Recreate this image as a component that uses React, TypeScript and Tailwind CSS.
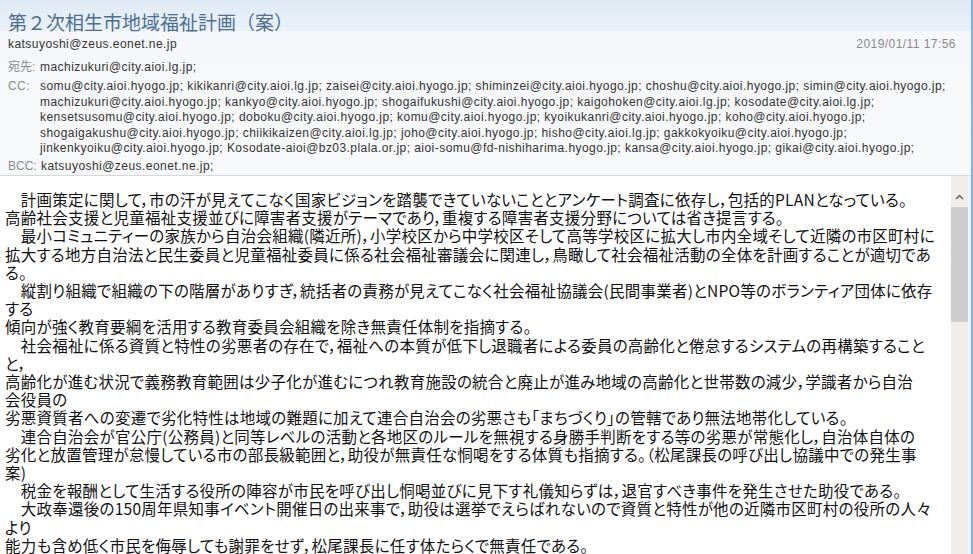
import React from "react";

const ccLines = [
  "somu@city.aioi.hyogo.jp; kikikanri@city.aioi.lg.jp; zaisei@city.aioi.hyogo.jp; shiminzei@city.aioi.hyogo.jp; choshu@city.aioi.hyogo.jp; simin@city.aioi.hyogo.jp;",
  "machizukuri@city.aioi.hyogo.jp; kankyo@city.aioi.hyogo.jp; shogaifukushi@city.aioi.hyogo.jp; kaigohoken@city.aioi.lg.jp; kosodate@city.aioi.lg.jp;",
  "kensetsusomu@city.aioi.hyogo.jp; doboku@city.aioi.hyogo.jp; komu@city.aioi.hyogo.jp; kyoikukanri@city.aioi.hyogo.jp; koho@city.aioi.hyogo.jp;",
  "shogaigakushu@city.aioi.hyogo.jp; chiikikaizen@city.aioi.lg.jp; joho@city.aioi.hyogo.jp; hisho@city.aioi.lg.jp; gakkokyoiku@city.aioi.hyogo.jp;",
  "jinkenkyoiku@city.aioi.hyogo.jp; Kosodate-aioi@bz03.plala.or.jp; aioi-somu@fd-nishiharima.hyogo.jp; kansa@city.aioi.hyogo.jp; gikai@city.aioi.hyogo.jp;",
];

const bodyLines = [
  "　計画策定に関して，市の汗が見えてこなく国家ビジョンを踏襲できていないこととアンケート調査に依存し，包括的PLANとなっている。",
  "高齢社会支援と児童福祉支援並びに障害者支援がテーマであり，重複する障害者支援分野については省き提言する。",
  "　最小コミュニティーの家族から自治会組織(隣近所)，小学校区から中学校区そして高等学校区に拡大し市内全域そして近隣の市区町村に",
  "拡大する地方自治法と民生委員と児童福祉委員に係る社会福祉審議会に関連し，鳥瞰して社会福祉活動の全体を計画することが適切であ",
  "る。",
  "　縦割り組織で組織の下の階層がありすぎ，統括者の責務が見えてこなく社会福祉協議会(民間事業者)とNPO等のボランティア団体に依存",
  "する",
  "傾向が強く教育要綱を活用する教育委員会組織を除き無責任体制を指摘する。",
  "　社会福祉に係る資質と特性の劣悪者の存在で，福祉への本質が低下し退職者による委員の高齢化と倦怠するシステムの再構築すること",
  "と，",
  "高齢化が進む状況で義務教育範囲は少子化が進むにつれ教育施設の統合と廃止が進み地域の高齢化と世帯数の減少，学識者から自治",
  "会役員の",
  "劣悪資質者への変遷で劣化特性は地域の難題に加えて連合自治会の劣悪さも「まちづくり」の管轄であり無法地帯化している。",
  "　連合自治会が官公庁(公務員)と同等レベルの活動と各地区のルールを無視する身勝手判断をする等の劣悪が常態化し，自治体自体の",
  "劣化と放置管理が怠慢している市の部長級範囲と，助役が無責任な恫喝をする体質も指摘する。（松尾課長の呼び出し協議中での発生事",
  "案)",
  "　税金を報酬として生活する役所の陣容が市民を呼び出し恫喝並びに見下す礼儀知らずは，退官すべき事件を発生させた助役である。",
  "　大政奉還後の150周年県知事イベント開催日の出来事で，助役は選挙でえらばれないので資質と特性が他の近隣市区町村の役所の人々",
  "より",
  "能力も含め低く市民を侮辱しても謝罪をせず，松尾課長に任す体たらくで無責任である。",
];

const App = () => {
  return (
    <div className="flex h-[554px] w-[973px] flex-col overflow-hidden border-r-2 border-[#7db3e6] bg-white font-['Liberation_Sans','Noto_Sans_CJK_JP',sans-serif]">
      <header className="h-[176px] shrink-0 border-b border-[#d5d9de] bg-[linear-gradient(to_bottom,#e1eaf4_0px,#e9f1fa_31px,#f5f7fa_31px,#f8f9fa_100%)] pl-[8px] pr-[15px] pt-[9px] text-[12px] tracking-[0.45px] text-[#333]">
        <h1 className="h-[26px] whitespace-nowrap font-['Noto_Sans_CJK_JP',sans-serif] text-[19px] leading-[26px] tracking-normal text-[#4f6f8e]">
          第２次相生市地域福祉計画（案）
        </h1>
        <div className="flex h-[18px] justify-between leading-[18px]">
          <span>katsuyoshi@zeus.eonet.ne.jp</span>
          <span className="text-[#8a8a8a]">2019/01/11 17:56</span>
        </div>
        <div className="mt-[5px] flex h-[18px] leading-[18px]">
          <span className="w-[32px] shrink-0 tracking-normal text-[#8a8a8a]">宛先:</span>
          <span>machizukuri@city.aioi.lg.jp;</span>
        </div>
        <div className="mt-[3px] flex leading-[15.6px]">
          <span className="w-[32px] shrink-0 text-[#8a8a8a]">CC:</span>
          <div>
            {ccLines.map((line) => (
              <div key={line} className="whitespace-nowrap">
                {line}
              </div>
            ))}
          </div>
        </div>
        <div className="mt-[1px] flex h-[16px] leading-[16px]">
          <span className="w-[33px] shrink-0 tracking-normal text-[#8a8a8a]">BCC:</span>
          <span>katsuyoshi@zeus.eonet.ne.jp;</span>
        </div>
      </header>

      <div className="flex min-h-0 flex-1">
        <div className="min-w-0 flex-1 overflow-hidden pl-[5px] pt-[14px] font-['Noto_Sans_CJK_JP',sans-serif] text-[15.5px] leading-[18.2px] tracking-[0.25px] text-[#111] [font-feature-settings:'palt']">
          {bodyLines.map((line, i) => (
            <div key={i} className="whitespace-nowrap">
              {line}
            </div>
          ))}
        </div>
        <div className="flex w-[17px] shrink-0 flex-col items-center bg-[#f1edea] pt-[12px]">
          <div className="flex h-[17px] w-full items-center justify-center">
            <svg width="9" height="6" viewBox="0 0 9 6">
              <path d="M1 5 L4.5 1.5 L8 5" fill="none" stroke="#606060" strokeWidth="1.5" />
            </svg>
          </div>
          <div className="mt-[2px] h-[115px] w-full bg-[#cdcdcd]" />
        </div>
        <div className="w-[3px] shrink-0 bg-[#eef5fb]" />
      </div>
    </div>
  );
};

export default App;
